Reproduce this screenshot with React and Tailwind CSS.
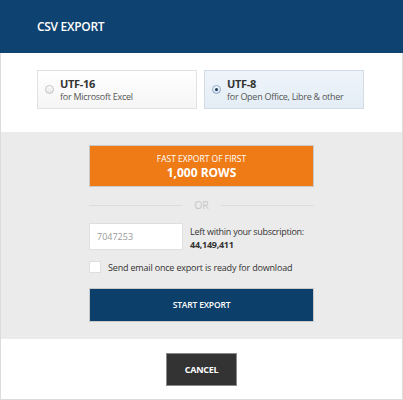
import React, { useState } from 'react';

export default function App() {
  const [encoding, setEncoding] = useState('utf8');
  const [rows, setRows] = useState('');
  const [sendEmail, setSendEmail] = useState(false);

  const font = { fontFamily: '"Open Sans", "Liberation Sans", sans-serif' };

  const Radio = ({ checked }) => (
    <span
      className={`flex h-[9px] w-[9px] shrink-0 items-center justify-center rounded-full border ${
        checked ? 'border-[#8ea9c8] bg-gradient-to-b from-[#f4f8fc] to-[#cfdff0]' : 'border-[#c4c4c4] bg-gradient-to-b from-white to-[#e4e4e4]'
      }`}
    >
      {checked && <span className="h-[3px] w-[3px] rounded-full bg-[#1d3550]" />}
    </span>
  );

  const Option = ({ id, title, hint }) => {
    const active = encoding === id;
    return (
      <button
        type="button"
        onClick={() => setEncoding(id)}
        className={`flex h-[39px] w-[160px] items-center gap-[6px] border px-[7px] text-left ${
          active ? 'border-[#d3dce6] bg-gradient-to-b from-[#eef4fa] to-[#e4edf6]' : 'border-[#e2e2e2] bg-gradient-to-b from-white to-[#f5f5f5]'
        }`}
      >
        <Radio checked={active} />
        <span className="flex flex-col">
          <span className="text-[11px] font-bold leading-[15px] tracking-[-0.03em] text-[#333]">{title}</span>
          <span className="whitespace-nowrap text-[9px] leading-[12px] tracking-[-0.03em] text-[#555]">{hint}</span>
        </span>
      </button>
    );
  };

  return (
    <div className="h-[400px] w-[403px] bg-white" style={font}>
      <div className="flex h-full flex-col border-x border-b border-[#dcdcdc]">
        {/* header */}
        <div className="-mx-px flex h-[53px] shrink-0 items-center bg-[#0e4270] px-[37px]">
          <h1 className="text-[12px] font-semibold tracking-[-0.025em] text-white">CSV EXPORT</h1>
        </div>

        {/* encoding choice */}
        <div className="flex h-[79px] shrink-0 gap-[7px] px-[36px] pt-[17px]">
          <Option id="utf16" title="UTF-16" hint="for Microsoft Excel" />
          <Option id="utf8" title="UTF-8" hint="for Open Office, Libre & other" />
        </div>

        {/* export options */}
        <div className="flex h-[207px] shrink-0 flex-col items-center bg-[#ebebeb] pt-[13px]">
          <div className="w-[225px]">
            <button
              type="button"
              className="flex h-[42px] w-full flex-col items-center justify-center border border-[#c9c9c9] bg-[#ef7b16] text-white"
            >
              <span className="text-[8.5px] leading-[12px]">FAST EXPORT OF FIRST</span>
              <span className="text-[12px] font-bold leading-[15px]">1,000 ROWS</span>
            </button>

            <div className="mt-[13px] flex items-center gap-[12px]">
              <div className="h-px flex-1 bg-[#dcdcdc]" />
              <span className="text-[10.5px] leading-none text-[#c6c6c6]">OR</span>
              <div className="h-px flex-1 bg-[#dcdcdc]" />
            </div>

            <div className="mt-[12px] flex items-start gap-[7px]">
              <input
                value={rows}
                onChange={(e) => setRows(e.target.value)}
                placeholder="7047253"
                className="h-[27px] w-[94px] border border-[#dedede] bg-white px-[7px] text-[9px] text-[#555] outline-none placeholder:text-[#9a9a9a]"
              />
              <div className="pt-[2px] text-[9px] leading-[13px] tracking-[-0.03em] text-[#333]">
                <div>Left within your subscription:</div>
                <div className="font-bold">44,149,411</div>
              </div>
            </div>

            <label className="mt-[10px] flex items-center gap-[7px] whitespace-nowrap text-[9px] tracking-[-0.02em] text-[#333]">
              <input
                type="checkbox"
                checked={sendEmail}
                onChange={(e) => setSendEmail(e.target.checked)}
                className="h-[12px] w-[12px] shrink-0 appearance-none border border-[#dedede] bg-white checked:bg-[#0d3f6b]"
              />
              Send email once export is ready for download
            </label>

            <button
              type="button"
              className="mt-[14px] h-[34px] w-full border border-[#c9c9c9] bg-[#0d3f6b] text-[8.5px] font-semibold tracking-[-0.02em] text-white"
            >
              START EXPORT
            </button>
          </div>
        </div>

        {/* footer */}
        <div className="flex flex-1 justify-center pt-[14px]">
          <button
            type="button"
            className="h-[33px] w-[71px] border border-[#8a8a8a] bg-[#333] text-[9px] font-bold tracking-[-0.03em] text-white"
          >
            CANCEL
          </button>
        </div>
      </div>
    </div>
  );
}
